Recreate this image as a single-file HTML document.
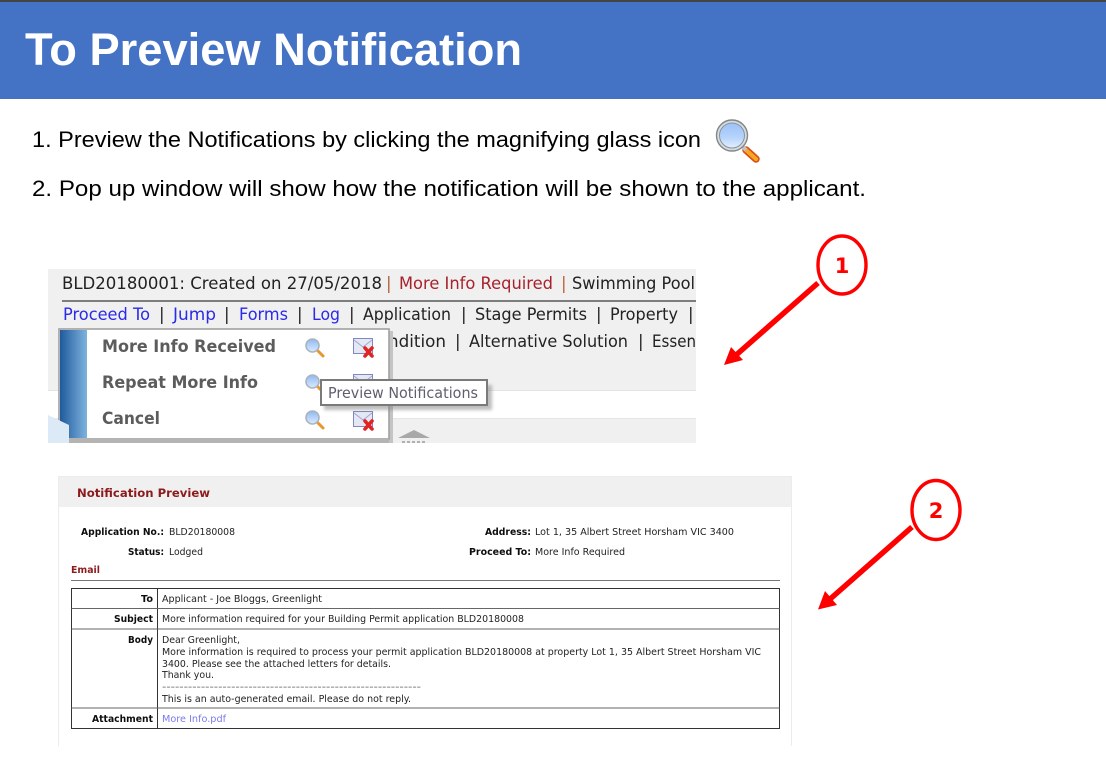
<!DOCTYPE html>
<html lang="en"><head><meta charset="utf-8"><title>To Preview Notification</title>
<style>
html,body{margin:0;padding:0;background:#fff;width:1106px;height:767px;overflow:hidden}
svg{display:block;position:absolute;left:0;top:0}
text{white-space:pre}
.c{font-family:"Liberation Sans",sans-serif}
.v{font-family:"DejaVu Sans",sans-serif}
</style></head><body>
<svg width="1106" height="767" viewBox="0 0 1106 767" xmlns="http://www.w3.org/2000/svg">
<defs>
<linearGradient id="lens" x1="0" y1="0" x2="0" y2="1"><stop offset="0" stop-color="#8fb8f2"/><stop offset="1" stop-color="#dcebff"/></linearGradient>
<linearGradient id="lens2" x1="0" y1="0" x2="0" y2="1"><stop offset="0" stop-color="#9cc2f8"/><stop offset=".55" stop-color="#b4d2fb"/><stop offset="1" stop-color="#e2efff"/></linearGradient>
<linearGradient id="side" x1="0" y1="0" x2="1" y2="0"><stop offset="0" stop-color="#1f5a9c"/><stop offset="1" stop-color="#7fb3de"/></linearGradient>
<filter id="sh" x="-10%" y="-20%" width="125%" height="150%"><feGaussianBlur stdDeviation="1.5"/></filter>
<filter id="soft" x="0" y="0" width="100%" height="100%"><feGaussianBlur stdDeviation="0.3"/></filter>
<g id="mag"><line x1="12" y1="12" x2="18" y2="18" stroke="#e9962e" stroke-width="3" stroke-linecap="round"/><circle cx="7.5" cy="7.5" r="6.5" fill="url(#lens)" stroke="#a9b4bd" stroke-width="1.6"/></g>
<g id="env"><rect x="0.5" y="0.5" width="19" height="15" fill="#e4e8f4" stroke="#8088c0"/><path d="M1 2 L10 9 L19 2" fill="none" stroke="#a0a6d0"/><path d="M12 10 L19 18 M19 10 L12 18" stroke="#e02424" stroke-width="3.6" stroke-linecap="round"/></g>
</defs>

<!-- Header -->
<rect x="0" y="0" width="1106" height="2" fill="#444"/>
<rect x="0" y="2" width="1106" height="97" fill="#4472c4"/>
<text class="c" x="25" y="65" font-size="45" font-weight="700" fill="#fff" textLength="497" lengthAdjust="spacingAndGlyphs">To Preview Notification</text>
<text class="c" x="32" y="147" font-size="22" fill="#000" textLength="669" lengthAdjust="spacingAndGlyphs">1. Preview the Notifications by clicking the magnifying glass icon</text>
<text class="c" x="32" y="196" font-size="22" fill="#000" textLength="834" lengthAdjust="spacingAndGlyphs">2. Pop up window will show how the notification will be shown to the applicant.</text>

<!-- Large magnifier -->
<line x1="746" y1="150" x2="756" y2="159" stroke="#d8501a" stroke-width="7.5" stroke-linecap="round"/>
<line x1="746" y1="150" x2="756" y2="159" stroke="#f8a820" stroke-width="4" stroke-linecap="round"/>
<line x1="743" y1="147" x2="746" y2="150" stroke="#c0c4c8" stroke-width="4"/>
<circle cx="732" cy="135.5" r="15.5" fill="#d8dcdf"/>
<circle cx="732" cy="135.5" r="15.5" fill="none" stroke="#7f878c" stroke-width="1.4"/>
<circle cx="732" cy="135.5" r="12.5" fill="url(#lens2)" stroke="#8a9298" stroke-width="1"/>

<!-- Screenshot 1 -->
<rect x="48" y="269" width="648" height="122" fill="#f0f0f0"/>
<rect x="48" y="390" width="648" height="1" fill="#e4e4e4"/>
<rect x="48" y="418" width="648" height="25" fill="#f0f0f0"/>
<rect x="48" y="418" width="648" height="1" fill="#e6e6e6"/>
<g class="v" font-size="16.5" filter="url(#soft)">
<text x="62" y="289" fill="#222" textLength="320" lengthAdjust="spacingAndGlyphs">BLD20180001: Created on 27/05/2018</text>
<text x="386" y="289" fill="#b06040">|</text>
<text x="399" y="289" fill="#a8202c" textLength="154" lengthAdjust="spacingAndGlyphs">More Info Required</text>
<text x="561" y="289" fill="#c06030">|</text>
<text x="572" y="289" fill="#222" textLength="123" lengthAdjust="spacingAndGlyphs">Swimming Pool</text>
<text x="63" y="320" fill="#2a2ae8" textLength="87" lengthAdjust="spacingAndGlyphs">Proceed To</text>
<text x="159" y="320" fill="#222">|</text>
<text x="173" y="320" fill="#2a2ae8" textLength="43" lengthAdjust="spacingAndGlyphs">Jump</text>
<text x="224" y="320" fill="#222">|</text>
<text x="239" y="320" fill="#2a2ae8" textLength="49" lengthAdjust="spacingAndGlyphs">Forms</text>
<text x="297" y="320" fill="#222">|</text>
<text x="312" y="320" fill="#2a2ae8" textLength="28" lengthAdjust="spacingAndGlyphs">Log</text>
<text x="349" y="320" fill="#222">|</text>
<text x="363" y="320" fill="#222" textLength="88" lengthAdjust="spacingAndGlyphs">Application</text>
<text x="461" y="320" fill="#222">|</text>
<text x="475" y="320" fill="#222" textLength="112" lengthAdjust="spacingAndGlyphs">Stage Permits</text>
<text x="596" y="320" fill="#222">|</text>
<text x="610" y="320" fill="#222" textLength="68" lengthAdjust="spacingAndGlyphs">Property</text>
<text x="688" y="320" fill="#222">|</text>
<text x="388" y="347" fill="#222" textLength="58" lengthAdjust="spacingAndGlyphs">ndition</text>
<text x="455" y="347" fill="#222">|</text>
<text x="469" y="347" fill="#222" textLength="159" lengthAdjust="spacingAndGlyphs">Alternative Solution</text>
<text x="638" y="347" fill="#222">|</text>
<text x="652" y="347" fill="#222" textLength="44" lengthAdjust="spacingAndGlyphs">Essen</text>
</g>
<rect x="62" y="300" width="634" height="2" fill="#7d7d7d"/>

<!-- Menu -->
<rect x="388" y="331" width="5" height="112" fill="#c4c4c4"/>
<rect x="59" y="329" width="330" height="110" fill="#fff" stroke="#a0a0a0" stroke-width="1.6"/>
<rect x="60" y="330" width="27" height="108" fill="url(#side)"/>
<rect x="59" y="439" width="330" height="4" fill="#b4b4b4"/>
<polygon points="48,415 69,425 69,443 48,443" fill="#dce9f6"/>
<g class="v" font-size="17" font-weight="700" fill="#5c5c5c" filter="url(#soft)">
<text x="102" y="352" textLength="174" lengthAdjust="spacingAndGlyphs">More Info Received</text>
<text x="102" y="388" textLength="156" lengthAdjust="spacingAndGlyphs">Repeat More Info</text>
<text x="102" y="424" textLength="58" lengthAdjust="spacingAndGlyphs">Cancel</text>
</g>
<use href="#mag" x="305" y="338"/>
<use href="#mag" x="305" y="374"/>
<use href="#mag" x="305" y="410"/>
<use href="#env" x="353" y="338"/>
<use href="#env" x="353" y="374"/>
<use href="#env" x="353" y="411"/>

<!-- Tooltip -->
<rect x="324" y="385" width="168" height="25" fill="#888" opacity=".55" filter="url(#sh)"/>
<rect x="321" y="380" width="166" height="25" fill="#fff" stroke="#7a7a7a" stroke-width="2"/>
<text class="v" x="328" y="398" font-size="15.5" fill="#5e5e6e" textLength="150" lengthAdjust="spacingAndGlyphs" filter="url(#soft)">Preview Notifications</text>

<!-- Grey triangle -->
<polygon points="398,438 414,430 430,438" fill="#a8a8a8"/>
<path d="M402 442h24" stroke="#b0b0b0" stroke-width="2" stroke-dasharray="3 2"/>

<!-- Arrow 1 -->
<ellipse cx="842" cy="265" rx="24" ry="29" fill="#fff" stroke="#f00" stroke-width="3.4"/>
<text class="v" x="842" y="273" font-size="21" font-weight="700" fill="#f00" text-anchor="middle">1</text>
<line x1="818" y1="283" x2="735" y2="356" stroke="#f00" stroke-width="5.4"/>
<polygon points="724,365 731,347 743,360" fill="#f00"/>

<!-- Notification card -->
<rect x="58.5" y="476.5" width="733" height="275" fill="#fff" stroke="#ececec"/>
<rect x="59" y="477" width="732" height="30" fill="#f0f0f0"/>
<rect x="0" y="746" width="1106" height="21" fill="#fff"/>
<g class="v" font-size="10" fill="#222" filter="url(#soft)">
<text x="77" y="497" font-size="11.5" font-weight="700" fill="#8c1a1e" textLength="133" lengthAdjust="spacingAndGlyphs">Notification Preview</text>
<g font-weight="700" fill="#111">
<text x="81" y="535" textLength="83" lengthAdjust="spacingAndGlyphs">Application No.:</text>
<text x="128" y="555" textLength="36" lengthAdjust="spacingAndGlyphs">Status:</text>
<text x="485" y="535" textLength="46" lengthAdjust="spacingAndGlyphs">Address:</text>
<text x="469" y="555" textLength="62" lengthAdjust="spacingAndGlyphs">Proceed To:</text>
<text x="141" y="602" textLength="12" lengthAdjust="spacingAndGlyphs">To</text>
<text x="114" y="622" textLength="39" lengthAdjust="spacingAndGlyphs">Subject</text>
<text x="128" y="643" textLength="25" lengthAdjust="spacingAndGlyphs">Body</text>
<text x="92" y="722" textLength="61" lengthAdjust="spacingAndGlyphs">Attachment</text>
</g>
<text x="169" y="535" textLength="66" lengthAdjust="spacingAndGlyphs">BLD20180008</text>
<text x="169" y="555" textLength="34" lengthAdjust="spacingAndGlyphs">Lodged</text>
<text x="535" y="535" textLength="199" lengthAdjust="spacingAndGlyphs">Lot 1, 35 Albert Street Horsham VIC 3400</text>
<text x="535" y="555" textLength="90" lengthAdjust="spacingAndGlyphs">More Info Required</text>
<text x="71" y="573" font-weight="700" fill="#8c1a1e" textLength="29" lengthAdjust="spacingAndGlyphs">Email</text>
<text x="162" y="602" textLength="160" lengthAdjust="spacingAndGlyphs">Applicant - Joe Bloggs, Greenlight</text>
<text x="162" y="622" textLength="362" lengthAdjust="spacingAndGlyphs">More information required for your Building Permit application BLD20180008</text>
<text x="162" y="643" textLength="78" lengthAdjust="spacingAndGlyphs">Dear Greenlight,</text>
<text x="162" y="655" textLength="599" lengthAdjust="spacingAndGlyphs">More information is required to process your permit application BLD20180008 at property Lot 1, 35 Albert Street Horsham VIC</text>
<text x="162" y="667" textLength="229" lengthAdjust="spacingAndGlyphs">3400. Please see the attached letters for details.</text>
<text x="162" y="678" textLength="52" lengthAdjust="spacingAndGlyphs">Thank you.</text>
<text x="162" y="690" fill="#666" textLength="259" lengthAdjust="spacingAndGlyphs">------------------------------------------------------------</text>
<text x="162" y="702" textLength="249" lengthAdjust="spacingAndGlyphs">This is an auto-generated email. Please do not reply.</text>
<text x="162" y="722" fill="#7a7af0" textLength="64" lengthAdjust="spacingAndGlyphs">More Info.pdf</text>
</g>
<rect x="71" y="580" width="709" height="1" fill="#777"/>
<g fill="none" stroke="#333" stroke-width="1">
<rect x="71.5" y="588.5" width="708" height="140"/>
<line x1="157.5" y1="588.5" x2="157.5" y2="728.5"/>
<line x1="71.5" y1="608.5" x2="779.5" y2="608.5" stroke="#666"/>
<line x1="71.5" y1="629" x2="779.5" y2="629" stroke="#666"/>
<line x1="71.5" y1="708" x2="779.5" y2="708" stroke="#666"/>
</g>

<!-- Arrow 2 -->
<ellipse cx="936" cy="510" rx="24" ry="29.5" fill="#fff" stroke="#f00" stroke-width="3.4"/>
<text class="v" x="936" y="518" font-size="21" font-weight="700" fill="#f00" text-anchor="middle">2</text>
<line x1="912" y1="527" x2="829" y2="600" stroke="#f00" stroke-width="5.4"/>
<polygon points="818,609.5 825,591 837,605" fill="#f00"/>
</svg>
</body></html>
